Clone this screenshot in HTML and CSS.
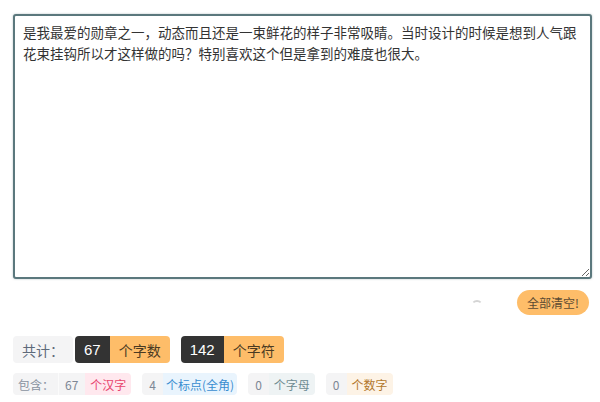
FILE: index.html
```html
<!DOCTYPE html>
<html lang="zh-CN">
<head>
    <meta charset="UTF-8">
    <title>字数统计</title>
    <link rel="stylesheet" href="styles.css">
</head>
<body>
    <div class="page">
        <textarea class="editor">是我最爱的勋章之一，动态而且还是一束鲜花的样子非常吸睛。当时设计的时候是想到人气跟花束挂钩所以才这样做的吗？特别喜欢这个但是拿到的难度也很大。</textarea>

        <div class="actions">
            <span class="spinner"></span>
            <button class="btn-clear">全部清空!</button>
        </div>

        <div class="total">
            <span class="tag tag-label">共计：</span>
            <span class="pair">
                <span class="num">67</span>
                <span class="unit">个字数</span>
            </span>
            <span class="pair">
                <span class="num">142</span>
                <span class="unit">个字符</span>
            </span>
        </div>

        <div class="detail">
            <span class="mini-group">
                <span class="mini mini-label">包含：</span>
                <span class="mini mini-num">67</span>
                <span class="mini mini-hanzi">个汉字</span>
            </span>
            <span class="mini-group">
                <span class="mini mini-num">4</span>
                <span class="mini mini-punct">个标点(全角)</span>
            </span>
            <span class="mini-group">
                <span class="mini mini-num">0</span>
                <span class="mini mini-letter">个字母</span>
            </span>
            <span class="mini-group">
                <span class="mini mini-num">0</span>
                <span class="mini mini-digit">个数字</span>
            </span>
        </div>
    </div>
</body>
</html>
```

FILE: styles.css
```css
body {
    margin: 0;
    font-family: "Liberation Sans", "Noto Sans CJK SC", sans-serif;
    color: #333;
    background: #fff;
}

.page {
    padding: 14px 8px 0 13px;
}

.editor {
    display: block;
    box-sizing: border-box;
    width: 579px;
    height: 265px;
    margin: 0;
    padding: 6px 8px;
    border: 2px solid #5b787d;
    border-radius: 3px;
    box-shadow: 0 0 2px rgba(91, 120, 125, 0.5);
    font-family: "Noto Sans CJK SC", sans-serif;
    font-size: 13.5px;
    line-height: 21px;
    color: #333;
    outline: none;
}

.actions {
    display: flex;
    align-items: center;
    justify-content: flex-end;
    width: 576px;
    margin-top: 11px;
    gap: 34px;
}

.spinner {
    width: 8px;
    height: 8px;
    margin-top: 6px;
    border: 2px solid transparent;
    border-top-color: #d4d4d4;
    border-radius: 50%;
}

.btn-clear {
    height: 25px;
    padding: 0 10px;
    border: none;
    border-radius: 13px;
    background: #febd69;
    color: #5b4a32;
    font-family: "Noto Sans CJK SC", sans-serif;
    font-size: 12px;
}

.total {
    display: flex;
    align-items: center;
    gap: 11px;
    margin-top: 21px;
}

.tag,
.num,
.unit {
    display: inline-flex;
    align-items: center;
    height: 27px;
    padding: 0 9px;
    font-family: "Noto Sans CJK SC", sans-serif;
    font-size: 14px;
    border-radius: 4px;
}

.tag-label {
    background: #f4f4f5;
    color: #5d6a7a;
    margin-right: -9px;
}

.pair {
    display: inline-flex;
}

.num {
    background: #333;
    color: #fff;
    border-radius: 4px 0 0 4px;
    font-family: "Liberation Sans", sans-serif;
    font-size: 15px;
}

.unit {
    background: #febd69;
    color: #4a3a22;
    border-radius: 0 4px 4px 0;
}

.detail {
    display: flex;
    gap: 11px;
    margin-top: 10px;
}

.mini-group {
    display: inline-flex;
}

.mini {
    display: inline-flex;
    align-items: center;
    height: 22px;
    padding: 0 5px;
    font-family: "Noto Sans CJK SC", sans-serif;
    font-size: 12px;
}

.mini-label {
    background: #f4f4f5;
    color: #8a93a0;
    border-radius: 4px 0 0 4px;
    padding: 0 4px 0 5px;
}

.mini-num {
    background: #f4f4f5;
    color: #7d8794;
    padding: 0 7px;
    border-radius: 4px 0 0 4px;
}

.mini-label + .mini-num {
    border-radius: 0;
    border-left: 1px solid #fbfbfb;
    padding-left: 6px;
}

.mini-hanzi,
.mini-punct,
.mini-letter,
.mini-digit {
    border-radius: 0 4px 4px 0;
}

.mini-hanzi {
    background: #ffe8ee;
    color: #e8466f;
}

.mini-punct {
    background: #e9f4fd;
    color: #3a8dd0;
    padding: 0 3px;
}

.mini-letter {
    background: #eef3f4;
    color: #6f8c92;
}

.mini-digit {
    background: #fdf3e6;
    color: #b3782c;
}
```
